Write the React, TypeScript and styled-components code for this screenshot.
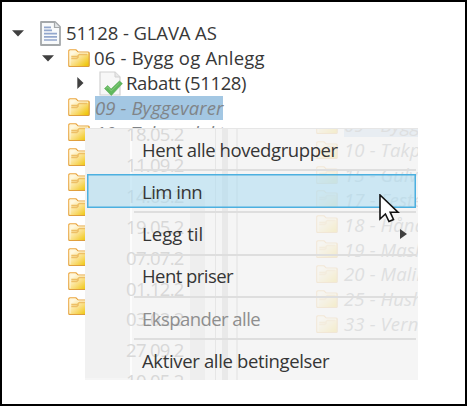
import React from "react";
import styled, { createGlobalStyle, css } from "styled-components";

const GlobalStyle = createGlobalStyle`
  * { box-sizing: border-box; }
  body { margin: 0; background: #fff; }
`;

const Frame = styled.main`
  position: relative;
  width: 467px;
  height: 406px;
  overflow: hidden;
  background: #fff;
  border: 2px solid #000;
  font-family: "Open Sans", "Noto Sans", sans-serif;
  font-size: 18.5px;
  line-height: 24px;
  color: #383838;
`;

const Tree = styled.div`
  display: flex;
  flex-direction: column;
  padding-top: 19px;
`;

const TreeRow = styled.div<{ $indent: number }>`
  display: flex;
  align-items: center;
  height: 24.85px;
  flex: none;
  padding-left: ${(p) => p.$indent}px;
  white-space: nowrap;
`;

const Label = styled.span<{ $gap?: number; $spacing?: number; $muted?: boolean; $selected?: boolean }>`
  margin-left: ${(p) => p.$gap ?? 5}px;
  letter-spacing: ${(p) => p.$spacing ?? -0.5}px;
  height: 24px;
  ${(p) => p.$muted && css`font-style: italic; color: #808488;`}
  ${(p) => p.$selected && css`background: #a3c7e3;`}
`;

const Icon = styled.svg<{ $before?: number }>`
  display: block;
  flex: none;
  margin-left: ${(p) => p.$before ?? 0}px;
`;

const Menu = styled.div`
  position: absolute;
  left: 83px;
  top: 126px;
  width: 333px;
  height: 252px;
  overflow: hidden;
  background: #f5f5f5;
  border-top: 1px solid #e6e6e6;
`;

const Gutter = styled.div`
  position: absolute;
  left: 0;
  top: 0;
  width: 47px;
  height: 249px;
  background: #f1f1f1;
  border-right: 2px solid #fcfcfc;
`;

const Stripe = styled.div<{ $x: number; $w: number; $top: number; $tone: string }>`
  position: absolute;
  left: ${(p) => p.$x}px;
  top: ${(p) => p.$top}px;
  bottom: 0;
  width: ${(p) => p.$w}px;
  background: ${(p) => p.$tone};
`;

const GhostDates = styled.div`
  position: absolute;
  left: 41px;
  top: -10px;
  display: flex;
  flex-direction: column;
  color: #d8d8d8;
  letter-spacing: -0.7px;
  line-height: 30.9px;
`;

const GhostTree = styled.div`
  position: absolute;
  left: 231px;
  top: -16px;
  display: flex;
  flex-direction: column;
`;

const GhostRow = styled.div<{ $selected?: boolean }>`
  display: flex;
  align-items: center;
  gap: 6px;
  height: 24.85px;
  white-space: nowrap;
  font-style: italic;
  letter-spacing: 0.15px;
  color: #dedfe0;
  svg { opacity: 0.16; }
  span { height: 24px; min-width: 90px; ${(p) => p.$selected && css`background: #e8edf2;`} }
`;

const Items = styled.div`
  position: absolute;
  inset: 0;
  display: flex;
  flex-direction: column;
  padding: 3px 2px 0;
`;

const Item = styled.div<{ $disabled?: boolean; $active?: boolean; $spacing: number }>`
  position: relative;
  display: flex;
  align-items: center;
  justify-content: space-between;
  flex: none;
  height: 34px;
  margin-bottom: 8.3px;
  padding: 1px 9px 0 55px;
  white-space: nowrap;
  letter-spacing: ${(p) => p.$spacing}px;
  color: ${(p) => (p.$disabled ? "#8e8e8e" : "#353535")};
  ${(p) => p.$active && css`
    background: rgba(170, 219, 240, 0.55);
    box-shadow: inset 0 0 0 1.5px #4cb0e0;
  `}
  &:not(:last-child)::after {
    content: "";
    position: absolute;
    left: 47px;
    right: 0;
    top: 37px;
    height: 2px;
    background: #dedede;
  }
`;

const Pointer = styled.svg`
  position: absolute;
  left: 377px;
  top: 192px;
`;

const Down = () => (
  <Icon width="12" height="7" viewBox="0 0 12 7"><path d="M0 .3h12L6 6.5z" fill="#404040" /></Icon>
);
const Right = () => (
  <Icon width="7" height="12" viewBox="0 0 7 12"><path d="M.3 0v12l6.2-6z" fill="#404040" /></Icon>
);

const Folder = ({ before }: { before?: number }) => (
  <Icon $before={before} width="22" height="19" viewBox="0 0 22 19">
    <defs>
      <linearGradient id="folderFill" x1="0" y1="0" x2="1" y2="1">
        <stop offset="0.2" stopColor="#fff8df" />
        <stop offset="0.58" stopColor="#f9dc78" />
        <stop offset="0.9" stopColor="#efc70d" />
      </linearGradient>
      <linearGradient id="folderEdge" x1="0" y1="0" x2="1" y2="1">
        <stop stopColor="#eda842" />
        <stop offset="1" stopColor="#d99b3c" />
      </linearGradient>
    </defs>
    <path d="M.8 1.8Q.8.8 1.8.8H8l2 2.2h10.2q1 0 1 1v12.5q0 1-1 1H1.8q-1 0-1-1z" fill="url(#folderFill)" stroke="url(#folderEdge)" strokeWidth="1.2" />
    <path d="M2 2v14.5M2 2h5.5l2.2 2.2H20" fill="none" stroke="#fff6d8" strokeWidth="1" />
    <path d="M3.3 7.5h6l2-2H19M3.3 9.5h5.5l2-2" fill="none" stroke="#edbf66" strokeWidth="1.3" />
  </Icon>
);

const Document = () => (
  <Icon $before={16} width="21" height="25" viewBox="0 0 21 25">
    <path d="M1 1h14l5 5v18H1z" fill="#f8fafb" stroke="#a4a8aa" strokeWidth="1.8" strokeLinejoin="round" />
    <path d="M14.5 1v5.5H20" fill="#e1e5e7" stroke="#a4a8aa" strokeWidth="1.2" />
    <path d="M4 6.3h7M4 9.4h8M4 12.6h13M4 15.8h13M4 19h13" stroke="#92a7cd" strokeWidth="1.7" />
  </Icon>
);

const CheckedDocument = () => (
  <Icon $before={15} width="24" height="25" viewBox="0 0 24 25">
    <path d="M1 1h15l5 5v18H1z" fill="#f7f7f7" stroke="#d1d1d1" strokeWidth="1.2" />
    <path d="M16 1v5h5" fill="#e8e8e8" stroke="#d1d1d1" />
    <path d="m5.5 17.5 3.2-3 3.4 3.5 8.3-8 3 2.6L12.3 24.5z" fill="#60b85c" stroke="#57a957" strokeWidth=".6" />
    <path d="m7.3 17.3 1.5-1.2 3.5 3.8 8.2-8" fill="none" stroke="#8acd7e" strokeWidth="1" />
  </Icon>
);

const dates = ["18.05.2", "11.09.2", "14.05.2", "19.05.2", "07.07.2", "01.12.2", "03.02.2", "27.09.2", "10.05.2"];
const groups = ["09 - Bygg", "10 - Takp", "15 - Gulv", "17 - Feste", "18 - Hånd", "19 - Mask", "20 - Malin", "25 - Hush", "33 - Vern"];
const menuItems = [
  { text: "Hent alle hovedgrupper", spacing: -0.4 },
  { text: "Lim inn", spacing: -0.5, active: true },
  { text: "Legg til", spacing: 0.05, submenu: true },
  { text: "Hent priser", spacing: -0.55 },
  { text: "Ekspander alle", spacing: -0.55, disabled: true },
  { text: "Aktiver alle betingelser", spacing: -0.35 },
];

export default function App() {
  return (
    <>
      <GlobalStyle />
      <Frame>
        <Tree>
          <TreeRow $indent={10}><Down /><Document /><Label $spacing={-0.12}>51128 - GLAVA AS</Label></TreeRow>
          <TreeRow $indent={40}><Down /><Folder before={14} /><Label $gap={4} $spacing={0.2}>06 - Bygg og Anlegg</Label></TreeRow>
          <TreeRow $indent={75}><Right /><CheckedDocument /><Label $gap={3} $spacing={-0.35}>Rabatt (51128)</Label></TreeRow>
          <TreeRow $indent={66}><Folder /><Label $spacing={0.12} $muted $selected>09 - Byggevarer</Label></TreeRow>
          <TreeRow $indent={66}><Folder /><Label $spacing={0} $muted>10 - Takprodukter</Label></TreeRow>
          {Array.from({ length: 7 }, (_, i) => <TreeRow key={i} $indent={66}><Folder /></TreeRow>)}
        </Tree>
        <Menu>
          <Gutter />
          <Stripe $x={105} $w={15} $top={62} $tone="#eeeeee" />
          <Stripe $x={130} $w={1} $top={0} $tone="#e6e6e6" />
          <Stripe $x={137} $w={6} $top={0} $tone="#e9e9e9" />
          <Stripe $x={151} $w={2} $top={0} $tone="#ebebeb" />
          <GhostDates>{dates.map((d) => <span key={d}>{d}</span>)}</GhostDates>
          <GhostTree>
            {groups.map((g, i) => <GhostRow key={g} $selected={i === 0}><Folder /><span>{g}</span></GhostRow>)}
          </GhostTree>
          <Items>
            {menuItems.map((m) => (
              <Item key={m.text} $spacing={m.spacing} $active={m.active} $disabled={m.disabled}>
                <span>{m.text}</span>{m.submenu && <svg width="7" height="10"><path d="M0 0v10l7-5z" fill="#404040" /></svg>}
              </Item>
            ))}
          </Items>
        </Menu>
        <Pointer width="22" height="30" viewBox="0 0 22 30">
          <path d="M1 1v24l5.4-5 3.6 7.5 4.5-2-3.3-7.3H19z" fill="#fff" stroke="#111" strokeWidth="1.6" />
        </Pointer>
      </Frame>
    </>
  );
}
